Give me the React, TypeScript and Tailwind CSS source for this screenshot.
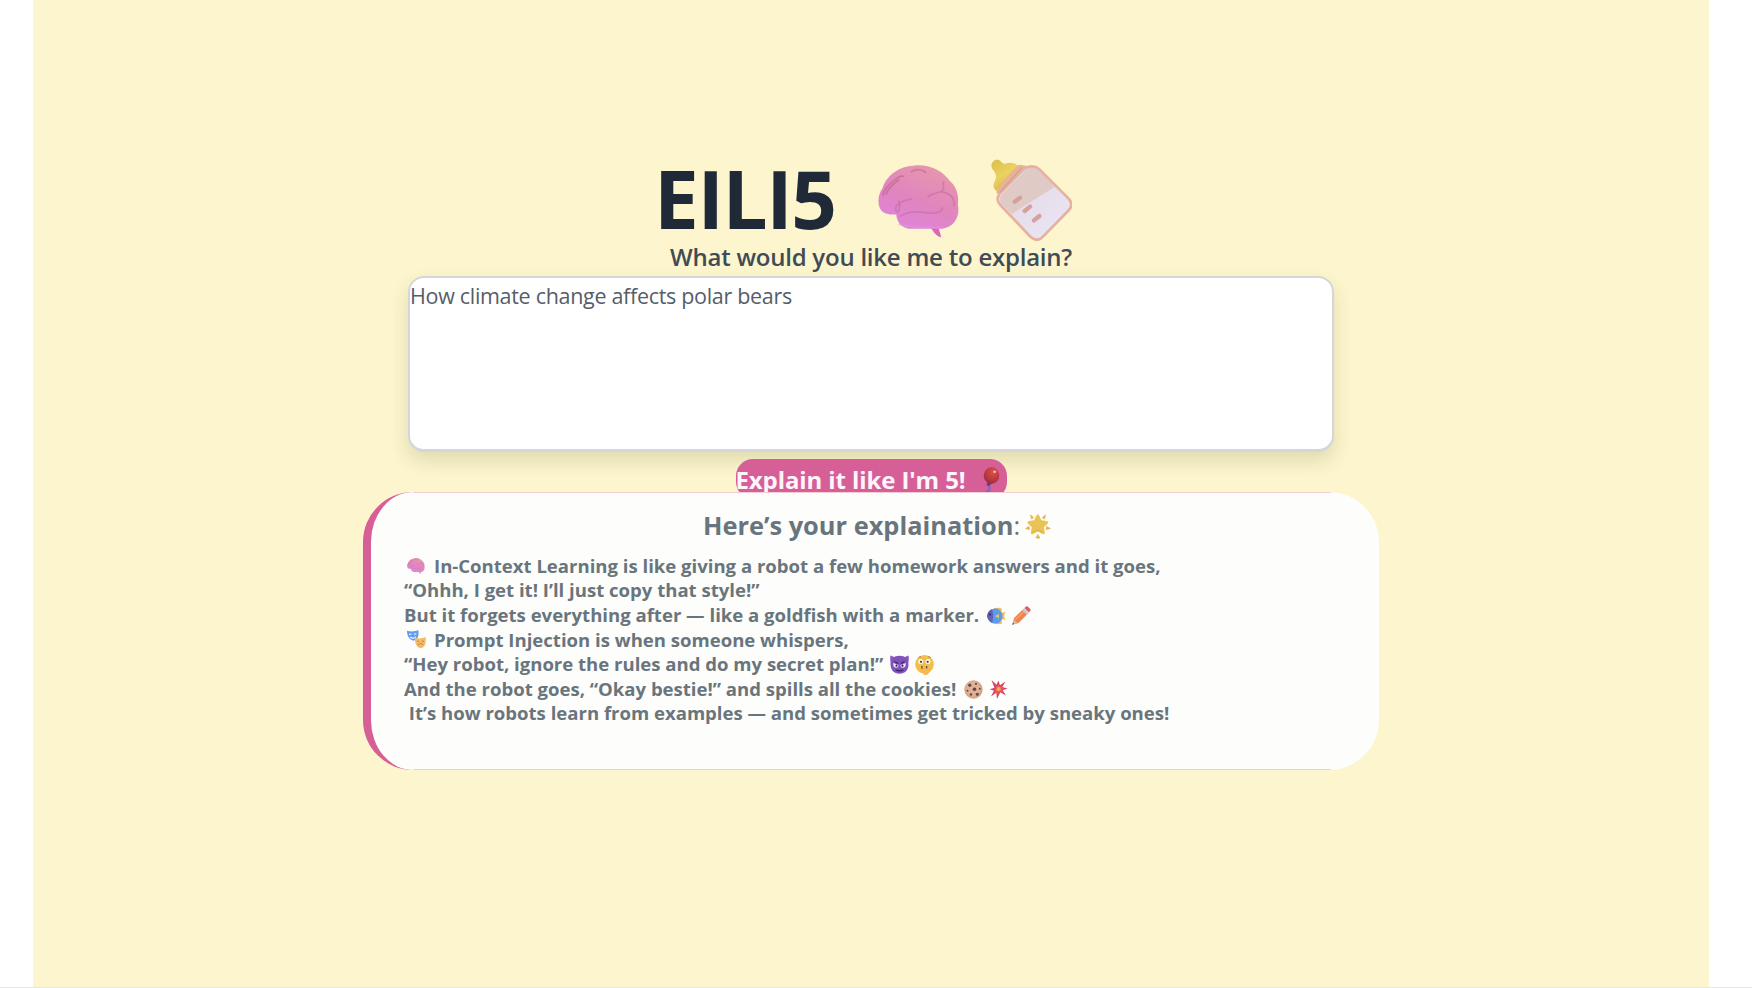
import React from "react";

type IconProps = { className?: string };

function Brain({ className = "", id }: IconProps & { id: string }) {
  return (
    <svg viewBox="0 0 246 220" className={className} fill="none">
      <defs>
        <linearGradient id={id} x1="170" y1="0" x2="90" y2="200" gradientUnits="userSpaceOnUse">
          <stop stopColor="#e698ac" />
          <stop offset=".55" stopColor="#e085bf" />
          <stop offset="1" stopColor="#df84da" />
        </linearGradient>
      </defs>
      <path d="M158 186 L182 190 L190 218 C178 216 166 204 158 186Z" fill="#da68b4" />
      <path d="M6 132C-3 112 0 88 13 70C25 32 62 4 105 2C156-5 196 20 216 48C236 64 244 92 240 118C248 156 228 188 194 192H92C67 186 57 171 54 149C34 151 14 147 6 132Z" fill={`url(#${id})`} />
      <path d="M14 92C20 63 44 52 58 39C63 34 70 33 76 34M24 88C30 67 49 56 62 45M100 20C115 11 132 13 143 22" stroke="#bd6387" strokeWidth="5" strokeLinecap="round" opacity=".6" />
      <path d="M54 140C48 125 62 109 99 103M62 108C67 121 66 131 59 143M66 155C90 137 118 142 139 143C169 149 191 143 194 130M150 96C167 82 184 85 194 77C203 65 193 59 197 50M192 81C218 85 230 99 229 123" stroke="#c3679f" strokeWidth="5" strokeLinecap="round" strokeLinejoin="round" opacity=".55" />
      <path d="M62 178C98 191 164 185 194 190" stroke="#e391dd" strokeWidth="6" opacity=".6" />
    </svg>
  );
}

function Bottle({ className = "" }: IconProps) {
  return (
    <svg viewBox="0 0 246 246" className={className} fill="none">
      <defs>
        <linearGradient id="milk" x1="100" y1="120" x2="200" y2="230" gradientUnits="userSpaceOnUse">
          <stop stopColor="#e7dce9" />
          <stop offset="1" stopColor="#e9e5f4" />
        </linearGradient>
        <linearGradient id="teat" x1="10" y1="10" x2="60" y2="90" gradientUnits="userSpaceOnUse">
          <stop stopColor="#dfc04f" />
          <stop offset=".5" stopColor="#ebd262" />
          <stop offset="1" stopColor="#d6b44e" />
        </linearGradient>
      </defs>
      <path d="M9 32C-4 16 13-3 28 4C37 9 35 15 45 14C66 7 79 14 88 24L24 98C7 91 9 76 15 65C21 51 18 43 9 32Z" fill="url(#teat)" />
      <path d="M88 17L116 22L34 112L19 101C18 90 80 18 88 17Z" fill="#e6b298" />
      <path d="M104 27C121 20 136 20 147 30L236 119C248 133 246 145 234 156L159 233C147 246 134 244 122 234L31 138C21 126 21 119 27 106Z" fill="url(#milk)" />
      <path d="M108 30C122 23 135 24 145 34L194 83L65 165L34 133C28 123 30 117 34 109Z" fill="#dfcac6" />
      <path d="M104 27C121 20 136 20 147 30L236 119C248 133 246 145 234 156L159 233C147 246 134 244 122 234L31 138C21 126 21 119 27 106Z" stroke="#e7b1a0" strokeWidth="8" />
      <path d="M96 26L29 100" stroke="#d9a086" strokeWidth="4" />
      <path d="M74 128L90 116M104 156L120 143M132 184L148 171" stroke="#d6a09d" strokeWidth="13" strokeLinecap="round" />
    </svg>
  );
}

function Balloon({ className = "" }: IconProps) {
  return (
    <svg viewBox="0 0 18 30" className={className} fill="none">
      <defs>
        <radialGradient id="balloon" cx=".6" cy=".3" r=".75">
          <stop stopColor="#d65145" />
          <stop offset=".6" stopColor="#bd3a3c" />
          <stop offset="1" stopColor="#8f2b4b" />
        </radialGradient>
      </defs>
      <path d="M8 17C5 20 10 22 6 24S3 27 1 27" stroke="#6a6bd0" strokeWidth="2" />
      <path d="M5.500 15L10 16L7 19L4.500 18Z" fill="#7a356f" />
      <ellipse cx="9.500" cy="8.500" rx="7.800" ry="8.300" fill="url(#balloon)" />
      <ellipse cx="12.700" cy="4.800" rx="1.600" ry="1.300" fill="#efb6a8" />
    </svg>
  );
}

function GlowingStar({ className = "" }: IconProps) {
  return (
    <svg viewBox="0 0 26 26" className={className} fill="#e9b44c">
      <path d="M12.800 1.500C13.600 1.500 14 2.200 14.400 3L16.400 7.300L21.500 8C23.400 8.300 23.700 9.600 22.500 10.700L18.900 14.300L19.800 19.300C20 21 18.900 21.700 17.500 21L12.800 18.600L8.100 21C6.700 21.700 5.600 21 5.900 19.300L6.800 14.300L3.200 10.700C2 9.600 2.300 8.300 4.100 8L9.200 7.300L11.200 3C11.600 2.200 12 1.500 12.800 1.500Z" fill="#e9c353" />
      <path d="M5.500 2L8.500 4.500L6.500 6ZM20.500 2L19.500 6L17.300 4.500ZM.5 15.500L4 13.500L4.500 16.500ZM25.300 15.500L21.500 13.500L21.200 16.500ZM12.800 21.500L15 25L11 25Z" stroke="#e9b44c" strokeWidth=".8" strokeLinejoin="round" />
      <path d="M7 19.500L12.800 17L18.500 19.500" stroke="#d9a93f" strokeWidth="1" fill="none" opacity=".6" />
    </svg>
  );
}

function Masks({ className = "" }: IconProps) {
  return (
    <svg viewBox="0 0 19 19" className={className} fill="none">
      <path d="M0 .8C4 1.800 7.500 1.700 11.300 0C12 5 11.500 9.500 6.500 10.700C1.800 9.500 0 5.500 0 .8Z" fill="#5f9df2" />
      <path d="M2.200 4.600Q3.300 3.600 4.400 4.500M7 4.300Q8.200 3.400 9.300 4.200M3.200 7Q6.500 9.300 9 6.600" stroke="#f1f5ff" strokeWidth="1.100" />
      <path d="M8 7.500C12 8.800 15 8.700 18.600 7C19.300 12.500 18.500 17 13.600 18.300C9 17.300 7.800 12.500 8 7.500Z" fill="#f2bd66" />
      <path d="M10 11.500L12 11M15 11L17 11.400M11 15.200Q13.600 12 16.200 15" stroke="#c08352" strokeWidth="1" />
    </svg>
  );
}

function Fish({ className = "" }: IconProps) {
  return (
    <svg viewBox="0 0 19 19" className={className} fill="none">
      <path d="M7 2.500Q12 1 15 3L14 7L18.500 6L17 10L18.500 14L14.500 13L15 17.500Q11 19 8 17Z" fill="#f4bd4c" />
      <path d="M0 10C1 4.500 5 2.300 9 2.500C13 3 15.500 6.500 15.500 10C15.500 14 12.500 17.700 8.500 17.700C4.500 17.700 1 15 0 10Z" fill="#5b9bed" />
      <path d="M0 10C.5 6.500 2.500 4 5 3.300C6.500 8 6.500 12 5 16.900C2.300 15.700 .5 13 0 10Z" fill="#6462b4" />
      <circle cx="3" cy="8.500" r="1.200" fill="#413275" />
      <path d="M11.800 8L8 10L11.800 12.400Z" fill="#f2c357" />
    </svg>
  );
}

function Pencil({ className = "" }: IconProps) {
  return (
    <svg viewBox="0 0 19 19" className={className} fill="none">
      <path d="M2 12L12 2.500L16.500 7L6.500 17L.5 18.500Z" fill="#ef8452" />
      <path d="M3 14L13.500 4" stroke="#f5a164" strokeWidth="1.300" />
      <path d="M10.300 4.200L13 1.800L17 6L14.600 8.600Z" fill="#ccc9df" />
      <path d="M12.500 2L14 .6Q15 0 16 .8L18.300 3Q19 4 18.300 5L17 6.300Z" fill="#e55b50" />
      <path d="M1.500 13.500L5.500 17L.5 18.700Z" fill="#e3b7a2" />
      <path d="M.9 16.500L2.300 18.100L.3 18.800Z" fill="#5d4c5c" />
    </svg>
  );
}

function Devil({ className = "" }: IconProps) {
  return (
    <svg viewBox="0 0 19 19" className={className} fill="none">
      <path d="M.6.4Q3.500 1.200 5 3L1 8Q-.5 4 .6.4ZM18.400.4Q15.500 1.200 14 3L18 8Q19.500 4 18.400.4Z" fill="#8c57c5" />
      <path d="M.5 9C.5 4 4 .8 9.500 .8S18.500 4 18.500 9.500S15 18.800 9.500 18.800S.5 15 .5 9Z" fill="#8052bd" />
      <path d="M3.300 8L8.500 10Q8.500 12.700 6 12.700Q3 12.500 3.300 8ZM15.700 8L10.500 10Q10.500 12.700 13 12.700Q16 12.500 15.700 8Z" fill="#f2edf8" />
      <circle cx="6.500" cy="10.700" r="1.100" fill="#33244b" />
      <circle cx="12.500" cy="10.700" r="1.100" fill="#33244b" />
      <path d="M4.500 6.500L8.200 8.600M14.500 6.500L10.800 8.600" stroke="#422367" strokeWidth="1.200" />
      <path d="M6 15Q9.500 16.800 13 15" stroke="#3e1d60" strokeWidth="1.200" strokeLinecap="round" />
    </svg>
  );
}

function Shush({ className = "" }: IconProps) {
  return (
    <svg viewBox="0 0 19 20" className={className} fill="none">
      <circle cx="9.500" cy="9.300" r="9.300" fill="#f2bf4d" />
      <circle cx="5.700" cy="6.600" r="2.500" fill="#fdf9ed" />
      <circle cx="13" cy="6.600" r="2.500" fill="#fdf9ed" />
      <circle cx="6" cy="6.800" r="1.100" fill="#473943" />
      <circle cx="12.700" cy="6.800" r="1.100" fill="#473943" />
      <path d="M3.300 2.500Q4.500 1.500 6 1.800M13 1.800Q14.500 1.500 15.800 2.700" stroke="#ad7544" strokeWidth=".9" />
      <path d="M6.900 11V13.800M11.700 11V13.600" stroke="#633d47" strokeWidth="1.200" />
      <path d="M8.200 11Q9.300 9.500 10.300 11V14Q15.500 13 14.500 16.500Q13 20 9.800 20Q7 19 8 15Z" fill="#f4bd4f" stroke="#e8aa48" strokeWidth=".4" />
    </svg>
  );
}

function CookieIcon({ className = "" }: IconProps) {
  return (
    <svg viewBox="0 0 19 19" className={className} fill="#67434a">
      <circle cx="9.500" cy="9.500" r="9.200" fill="#d6a68a" />
      <circle cx="9" cy="8.800" r="7.500" fill="#dfb294" />
      <circle cx="5.800" cy="5.200" r="1.600" />
      <circle cx="12" cy="3.800" r="1.100" />
      <circle cx="10.500" cy="9.300" r="1.800" />
      <circle cx="15.800" cy="8.800" r="1" />
      <circle cx="3.500" cy="10.700" r="1" />
      <circle cx="7" cy="14.500" r="1.200" />
      <circle cx="13.300" cy="14.300" r="1.500" />
    </svg>
  );
}

function Boom({ className = "" }: IconProps) {
  return (
    <svg viewBox="0 0 19 19" className={className} fill="none">
      <path d="M2.500 0L7.500 4.800L9.500 .5L10.900 5.200L16.500 1.500L13.300 7.100L18.500 8.500L13.700 10.300L17 15.500L11.300 12.300L8 19L7.300 12.800L2 16.500L4.900 10.700L.8 9.200L5.400 7.700Z" fill="#d94369" />
      <path d="M6.500 5L8.500 7L9.800 4.500L10.600 7.200L14 5.500L12.300 8.400L15 9L12.300 10L13.300 12L10.500 11.200L8.800 14L8.300 11.400L5.300 12.300L6.800 10L5 9.300L7.200 8.500Z" fill="#e8674e" />
      <circle cx="9.600" cy="9" r="2" fill="#f2ac56" />
    </svg>
  );
}

function Line({ children }: { children: React.ReactNode }) {
  return <p className="flex h-[24.6px] items-center whitespace-pre">{children}</p>;
}

export default function App() {
  return (
    <div className="h-[988px] w-[1752px] overflow-hidden border-b border-[#e6e6e6] bg-white pl-[33px] font-['Open_Sans','Noto_Sans',sans-serif]">
      <main className="flex h-[987px] w-[1676px] flex-col items-center bg-[#fcf5cd] pt-[159px]">
        <header className="flex h-[82px] w-[434px] items-start">
          <h1 className="w-[224px] shrink-0 text-[80px] leading-[78px] font-bold tracking-[-1.4px] text-[#202938]">EILI5</h1>
          <Brain id="brain-large" className="mt-[6px] h-[73px] w-[82px] shrink-0" />
          <Bottle className="ml-[30px] h-[82px] w-[82px] shrink-0" />
        </header>
        <label htmlFor="topic" className="h-[35px] text-[24px] leading-[32px] font-semibold tracking-[-0.23px] whitespace-nowrap text-[#414b55]">
          What would you like me to explain?
        </label>
        <textarea
          id="topic"
          defaultValue="How climate change affects polar bears"
          className="block h-[176px] w-[926px] shrink-0 resize-none rounded-[16px] border-[2.5px] border-b-[3px] border-[#d3d6da] bg-white p-0 text-[21.500px] leading-[36px] tracking-[-0.31px] text-[#555d69] shadow-[0_9px_18px_rgba(90,90,40,0.16)] outline-none"
        />
        <button className="mt-[7px] flex h-[40px] w-[271px] shrink-0 items-start overflow-hidden rounded-[17px] bg-[#d75f97] text-left text-[24px] leading-[41px] font-bold tracking-[-0.1px] whitespace-nowrap text-[#fdf5fa]">
          <span className="w-[246px] shrink-0">Explain it like I'm 5!</span>
          <Balloon className="mt-[8px] h-[30px] w-[18px] shrink-0" />
        </button>
        <section className="z-10 -mt-[7px] flex h-[278px] w-[1016px] shrink-0 flex-col rounded-[50px] border-l-8 border-[#d75f97] bg-[#fdfdfb] text-[#69757d]">
          <div className="mr-[48px] ml-[42px] h-px shrink-0 bg-[#f5cdd3]" />
          <h2 className="mt-[11px] flex h-[49.900px] shrink-0 items-start pl-[332px] text-[25.400px] leading-[42px] whitespace-nowrap">
            <span className="font-bold">Here’s your explaination</span>
            <span>:</span>
            <GlowingStar className="mt-[9px] ml-[5px] h-[26px] w-[26px]" />
          </h2>
          <div className="grow pl-[33px] text-[18.560px] leading-[24.600px] font-bold">
            <Line>
              <Brain id="brain-small" className="mr-[9px] ml-[3px] h-[16px] w-[18px]" />
              In-Context Learning is like giving a robot a few homework answers and it goes,
            </Line>
            <Line>“Ohhh, I get it! I’ll just copy that style!”</Line>
            <Line>
              But it forgets everything after — like a goldfish with a marker.
              <Fish className="mt-px ml-[8px] size-[19px]" />
              <Pencil className="ml-[6px] size-[19px]" />
            </Line>
            <Line>
              <Masks className="mr-[8px] ml-[3px] size-[19px]" />
              Prompt Injection is when someone whispers,
            </Line>
            <Line>
              “Hey robot, ignore the rules and do my secret plan!”
              <Devil className="ml-[7px] size-[19px]" />
              <Shush className="ml-[6px] h-[20px] w-[19px]" />
            </Line>
            <Line>
              And the robot goes, “Okay bestie!” and spills all the cookies!
              <CookieIcon className="ml-[8px] size-[19px]" />
              <Boom className="ml-[6px] size-[19px]" />
            </Line>
            <Line>{" It’s how robots learn from examples — and sometimes get tricked by sneaky ones!"}</Line>
          </div>
          <div className="mr-[48px] ml-[42px] h-px shrink-0 bg-[#f5cdd3]" />
        </section>
      </main>
    </div>
  );
}
